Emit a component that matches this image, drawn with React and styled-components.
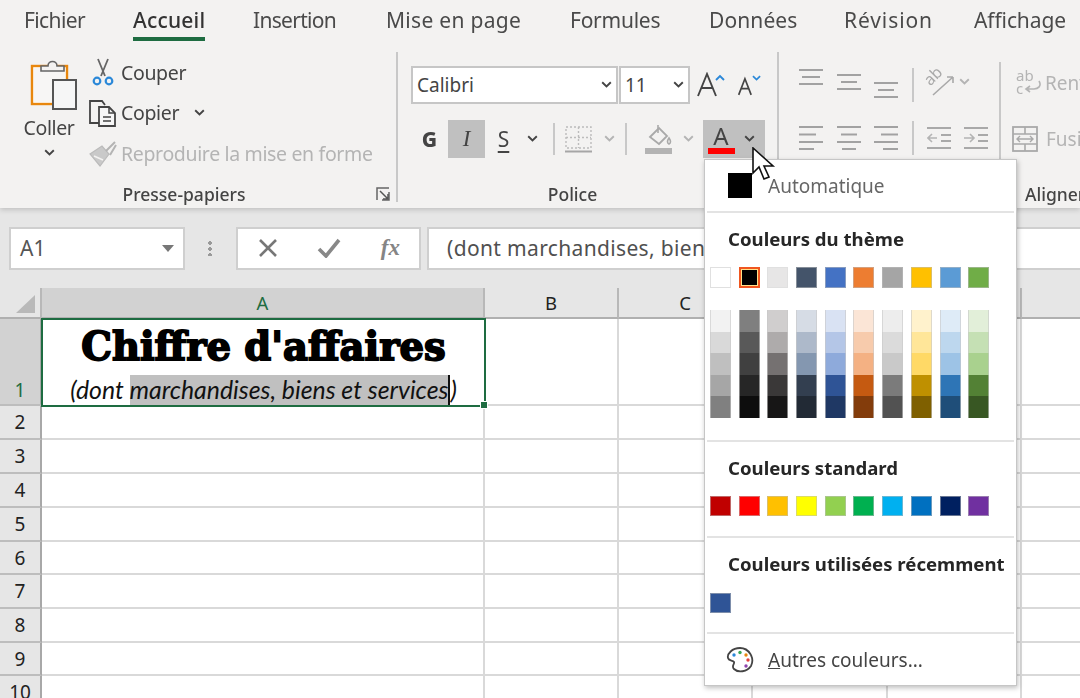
import React from "react";
import styled, { createGlobalStyle } from "styled-components";

const Global = createGlobalStyle`
  html, body { margin: 0; padding: 0; background: #fff; overflow: hidden; }
  * { box-sizing: border-box; }
  svg { flex: none; }
  #root { width: 1080px; height: 698px; overflow: hidden; }
`;

const UI = `"Noto Sans", "Open Sans", sans-serif`;

const Page = styled.div`
  position: relative;
  width: 1080px;
  height: 698px;
  overflow: hidden;
  font-family: ${UI};
  filter: blur(0.45px);
`;

const Ribbon = styled.header`
  height: 208px;
  background: #f3f2f1;
  position: relative;
  z-index: 1;
  box-shadow: 0 2px 5px rgba(0, 0, 0, 0.16);
`;
const TabBar = styled.nav`
  height: 44px;
  display: flex;
  padding-left: 24px;
`;
const Tab = styled.div`
  width: ${(p) => p.$w}px;
  flex: none;
`;
const TabText = styled.span`
  display: inline-block;
  height: 41px;
  line-height: 41px;
  font-size: 21px;
  letter-spacing: ${(p) => p.$ls}px;
  color: ${(p) => (p.$active ? "#333" : "#4a4a4a")};
  white-space: nowrap;
  font-weight: ${(p) => (p.$active ? 500 : 400)};
  border-bottom: 4px solid ${(p) => (p.$active ? "#1e6c41" : "transparent")};
`;
const Groups = styled.div`
  display: flex;
  height: 156px;
  padding-top: 8px;
`;
const Group = styled.section`
  width: ${(p) => p.$w}px;
  flex: none;
  height: 150px;
  display: flex;
  flex-direction: column;
  border-right: ${(p) => (p.$last ? "none" : "2px solid #c8c8c8")};
  padding-left: ${(p) => p.$pl || 0}px;
`;
const GroupBody = styled.div`
  flex: 1;
  display: ${(p) => (p.$col ? "block" : "flex")};
  min-height: 0;
`;
const GroupFoot = styled.div`
  height: 16px;
  display: grid;
  grid-template-columns: 1fr 20px;
  align-items: center;
  margin-left: ${(p) => p.$ml || 0}px;
  white-space: nowrap;
`;
const GroupLabel = styled.div`
  font-size: 17.5px;
  line-height: 16px;
  font-weight: 500;
  color: #444;
  text-align: ${(p) => (p.$left ? "left" : "center")};
  padding-right: ${(p) => p.$pr || 0}px;
`;
const SplitBody = styled.div`
  height: 106px;
  margin-top: 10px;
  border-left: 2px solid #c8c8c8;
  padding-left: 15px;
`;
const SplitFill = styled.div`
  flex: 1;
`;

const PasteCol = styled.div`
  width: 54px;
  margin: 6px 0 0 22px;
  display: flex;
  flex-direction: column;
  align-items: center;
`;
const PasteIcon = styled.span`
  display: flex;
  margin-left: 7px;
`;
const PasteText = styled.div`
  font-size: 19.5px;
  letter-spacing: -0.4px;
  line-height: 26px;
  margin-top: 3px;
  color: #444;
`;
const PasteChevron = styled.div`
  margin-top: 8px;
  height: 12px;
  display: flex;
`;
const ClipList = styled.div`
  margin-left: 13px;
  display: flex;
  flex-direction: column;
`;
const ClipRow = styled.div`
  height: 40.5px;
  display: flex;
  align-items: center;
  gap: 5px;
  color: ${(p) => (p.$off ? "#b4b4b4" : "#444")};
  font-size: 19.5px;
  letter-spacing: -0.35px;
  white-space: nowrap;
`;
const ClipIcon = styled.span`
  width: 27px;
  display: flex;
  justify-content: center;
`;
const ClipChevron = styled.span`
  margin-left: 10px;
  display: flex;
`;

const FontRow = styled.div`
  display: flex;
  align-items: center;
  height: 38px;
  margin-top: ${(p) => p.$mt}px;
`;
const Combo = styled.div`
  width: ${(p) => p.$w}px;
  margin-right: ${(p) => p.$mr || 0}px;
  height: 38px;
  background: #fff;
  border: 2px solid #c6c6c6;
  display: flex;
  align-items: center;
  justify-content: space-between;
  padding: 0 4px 0 4px;
  font-size: 19px;
  color: #444;
`;
const GrowBtn = styled.span`
  display: flex;
  margin-left: ${(p) => p.$ml}px;
`;
const ToggleBtn = styled.div`
  width: ${(p) => p.$w}px;
  margin-left: ${(p) => p.$ml || 0}px;
  height: 38px;
  display: flex;
  align-items: center;
  justify-content: center;
  padding-right: ${(p) => p.$pr || 0}px;
  background: ${(p) => (p.$on ? "#c0c0c0" : "transparent")};
  font-size: 21px;
  color: #444;
`;
const BoldG = styled.span`font-weight: 800;`;
const ItalicI = styled.span`font-family: "Liberation Serif", serif; font-style: italic; font-size: 23px;`;
const UnderS = styled.span`text-decoration: underline; text-underline-offset: 4px; font-size: 21px;`;
const VSep = styled.span`
  width: 2px;
  height: ${(p) => p.$h || 32}px;
  margin-left: ${(p) => p.$l || 0}px;
  background: #c8c8c8;
  flex: none;
`;
const Slot = styled.span`
  display: flex;
  margin-left: ${(p) => p.$ml || 0}px;
  margin-top: ${(p) => p.$mt || 0}px;
`;
const ColorA = styled.span`
  width: 27px;
  display: flex;
  flex-direction: column;
  align-items: center;
  font-size: 24px;
  line-height: 25px;
  margin-top: -1px;
  color: #444;
`;
const ColorBar = styled.span`
  width: 27px;
  height: 6px;
  background: ${(p) => p.$c};
`;

const AlignRow = styled.div`
  display: flex;
  align-items: ${(p) => p.$ai || "center"};
  height: ${(p) => p.$h}px;
  margin-top: ${(p) => p.$mt}px;
`;
const FadedText = styled.span`
  font-size: 19px;
  color: #b4b4b4;
  margin-left: ${(p) => p.$ml}px;
  white-space: nowrap;
`;
const ShiftLeft = styled.span`
  display: flex;
  margin-left: -4px;
`;

const FormulaBar = styled.div`
  height: 80px;
  background: #e6e6e6;
  display: flex;
  align-items: center;
  padding: 17px 0 17px 9px;
`;
const NameBox = styled.div`
  width: 176px;
  height: 43px;
  background: #fff;
  border: 2px solid #cfcfcf;
  display: flex;
  align-items: center;
  justify-content: space-between;
  padding: 0 9px 0 9px;
  font-size: 21px;
  color: #555;
`;
const Caret = styled.span`
  width: 0;
  height: 0;
  border-left: 6px solid transparent;
  border-right: 6px solid transparent;
  border-top: 7px solid #777;
`;
const Grip = styled.span`
  width: 4px;
  height: 16px;
  margin: 0 24px 0 23px;
  background: radial-gradient(circle, #999 1.6px, transparent 2px) 0 0 / 4px 6px;
`;
const FxBox = styled.div`
  width: 185px;
  height: 43px;
  background: #fff;
  border: 2px solid #cfcfcf;
  display: flex;
  align-items: center;
  justify-content: space-between;
  padding: 0 19px 0 20px;
  margin-right: 6px;
`;
const Fx = styled.span`
  font-family: "Liberation Serif", serif;
  font-style: italic;
  font-weight: 700;
  font-size: 23px;
  color: #858585;
`;
const FormulaInput = styled.div`
  flex: 1;
  height: 43px;
  background: #fff;
  border: 2px solid #cfcfcf;
  border-right: none;
  line-height: 39px;
  padding-left: 18px;
  font-size: 21px;
  letter-spacing: 0.35px;
  color: #505050;
  white-space: nowrap;
  overflow: hidden;
`;

const Sheet = styled.div`
  display: grid;
  grid-template-columns: 42px 443px 134px 134px 135px 134px 134px;
  grid-template-rows: 31px 87px 34px 34px 34px 34px 33px 34px 34px 33px 34px;
  background: #fff;
  width: 1156px;
`;
const CornerCell = styled.div`
  background: #e6e6e6;
  border-right: 2px solid #b8b8b8;
  border-bottom: 2px solid #b0b0b0;
  display: flex;
  align-items: flex-end;
  justify-content: flex-end;
  padding: 0 5px 4px 0;
`;
const Triangle = styled.span`
  width: 0;
  height: 0;
  border-left: 19px solid transparent;
  border-bottom: 18px solid #b9b9b9;
`;
const ColHead = styled.div`
  background: ${(p) => (p.$sel ? "#d2d2d2" : "#e6e6e6")};
  color: ${(p) => (p.$sel ? "#1e6c41" : "#222")};
  border-right: 2px solid #b8b8b8;
  border-bottom: 2px solid #b0b0b0;
  display: flex;
  align-items: center;
  justify-content: center;
  font-size: 18.5px;
`;
const RowHead = styled.div`
  background: ${(p) => (p.$sel ? "#d2d2d2" : "#e6e6e6")};
  color: ${(p) => (p.$sel ? "#1e6c41" : "#222")};
  border-right: 2px solid #a8a8a8;
  border-bottom: 2px solid #bdbdbd;
  display: flex;
  align-items: ${(p) => (p.$sel ? "flex-end" : "center")};
  justify-content: center;
  padding-bottom: ${(p) => (p.$sel ? 1 : 0)}px;
  font-size: 19px;
`;
const Cell = styled.div`
  border-right: 2px solid #d9d9d9;
  border-bottom: 2px solid #d9d9d9;
`;
const ActiveCell = styled.div`
  position: relative;
  margin: -1px;
  border: 2px solid #1e6c41;
  background: #fff;
  z-index: 1;
  display: flex;
  flex-direction: column;
  align-items: center;
  white-space: nowrap;
`;
const Handle = styled.span`
  position: absolute;
  right: -4px;
  bottom: -4px;
  width: 8px;
  height: 8px;
  background: #1e6c41;
  border: 1px solid #fff;
`;
const Title = styled.div`
  font-family: "DejaVu Serif", serif;
  font-weight: 700;
  font-size: 38.5px;
  line-height: 46px;
  margin-top: 4px;
  color: #000;
  -webkit-text-stroke: 1.8px #000;
`;
const SubTitle = styled.div`
  font-family: Lato, sans-serif;
  font-style: italic;
  font-size: 24.8px;
  line-height: 30px;
  margin-top: 5px;
  color: #111;
`;
const Selected = styled.span`
  display: inline-block;
  background: #c0c0c0;
  border-right: 2px solid #111;
`;

const Menu = styled.div`
  position: absolute;
  left: 704px;
  top: 159px;
  width: 313px;
  height: 527px;
  z-index: 3;
  background: #fff;
  border: 1px solid #c6c6c6;
  box-shadow: 1px 2px 5px rgba(0, 0, 0, 0.25);
  padding: 0 2px;
`;
const AutoRow = styled.div`
  height: 51px;
  display: flex;
  align-items: center;
  gap: 16px;
  padding-left: 21px;
  font-size: 19px;
  color: #666;
`;
const AutoSwatch = styled.span`
  width: 24px;
  height: 25px;
  background: #000;
`;
const Divider = styled.div`
  height: 2px;
  background: #e3e3e3;
`;
const MenuTitle = styled.div`
  font-size: 18.6px;
  font-weight: 700;
  color: #262626;
  padding-left: 21px;
  line-height: 26px;
  margin-top: ${(p) => p.$mt}px;
  white-space: nowrap;
`;
const SwatchGrid = styled.div`
  display: flex;
  padding-left: 3px;
  margin-top: ${(p) => p.$mt}px;
`;
const SwatchCell = styled.div`
  width: 28.7px;
  display: flex;
  flex-direction: column;
`;
const Swatch = styled.span`
  width: 21px;
  height: ${(p) => p.$h || 21}px;
  background: ${(p) => p.$c};
  border: 1px solid ${(p) => (p.$white ? "#e0e0e0" : "rgba(190,190,190,0.55)")};
`;
const PickedSwatch = styled.span`
  width: 21px;
  height: 21px;
  background: #000;
  border: 2px solid #f0561f;
  box-shadow: inset 0 0 0 1px #ffe28a;
`;
const RampSeg = styled.span`
  width: 21px;
  height: 21.5px;
  background: ${(p) => p.$c};
  border-left: 1px solid rgba(200,200,200,0.6);
  border-right: 1px solid rgba(200,200,200,0.6);
`;
const MoreRow = styled.div`
  height: 52px;
  display: flex;
  align-items: center;
  padding-left: 19px;
  gap: 14px;
  font-size: 19px;
  color: #444;
`;
const AccessKey = styled.span`text-decoration: underline;`;
const CursorArrow = styled.svg`
  position: absolute;
  left: 751px;
  top: 147px;
  z-index: 4;
`;

const Chevron = ({ c = "#444", w = 11 }) => (
  <svg width={w} height={w * 0.65} viewBox="0 0 11 7" fill="none">
    <path d="M1.2 1.2 5.5 5.4 9.8 1.2" stroke={c} strokeWidth="1.9" />
  </svg>
);

const LineStack = ({ lines, color = "#a2a2a2", h = 20, w = 24 }) => (
  <svg width={w} height={h} viewBox={`0 0 ${w} ${h}`}>
    {lines.map(([x1, x2, y], i) => (
      <line key={i} x1={x1} x2={x2} y1={y} y2={y} stroke={color} strokeWidth="2" />
    ))}
  </svg>
);

const ClipboardIcon = () => (
  <svg width="48" height="54" viewBox="0 0 48 54" fill="none">
    <rect x="3" y="8" width="35" height="38" fill="#fff" stroke="#e8870e" strokeWidth="2.4" />
    <rect x="5" y="10" width="31" height="34" fill="#f7f6f5" />
    <path d="M12 13V8h7c0-6 9-6 9 0h7v5H12Z" fill="#f3f2f1" stroke="#666" strokeWidth="1.6" />
    <rect x="24" y="22" width="23" height="29" fill="#f6f6f6" stroke="#555" strokeWidth="2" />
  </svg>
);
const Scissors = () => (
  <svg width="22" height="28" viewBox="0 0 22 28" fill="none">
    <path d="M6 1 13 18M16 1 9 18" stroke="#666" strokeWidth="1.8" />
    <circle cx="5" cy="23" r="3.3" stroke="#2b88d8" strokeWidth="2.2" />
    <circle cx="17" cy="23" r="3.3" stroke="#2b88d8" strokeWidth="2.2" />
  </svg>
);
const CopyIcon = () => (
  <svg width="29" height="28" viewBox="0 0 29 28" fill="none">
    <path d="M11 24H2V2h12l3 4" stroke="#444" strokeWidth="1.8" />
    <path d="M11 8h10l6 6v13H11V8Z" fill="#f6f6f6" stroke="#444" strokeWidth="1.8" />
    <path d="M21 8v6h6M15 18h8M15 22h8" stroke="#444" strokeWidth="1.5" />
  </svg>
);
const BrushIcon = () => (
  <svg width="28" height="27" viewBox="0 0 28 27" fill="none">
    <path d="M1 14 13 6l7 8-9 12L1 14Z" fill="#c9c9c9" stroke="#bbb" strokeWidth="1.2" />
    <path d="M17 11 26 2M21 15 27 5" stroke="#b4b4b4" strokeWidth="2" />
    <path d="M5 16 14 20" stroke="#f3f2f1" strokeWidth="1.4" />
  </svg>
);
const Launcher = () => (
  <svg width="14" height="14" viewBox="0 0 14 14" fill="none">
    <path d="M1 13V1h12M13 5v8H6" stroke="#666" strokeWidth="1.5" />
    <path d="M4 4l8 8M12 7v5H7" stroke="#555" strokeWidth="1.5" />
  </svg>
);
const GrowFont = ({ up }) => (
  <svg width={up ? 28 : 25} height="26" viewBox="0 0 28 26" fill="none">
    <path d={up ? "M1 24 10 2l9 22M4.5 16h11" : "M3 24 10 6l7 18M5.7 17h8.6"} stroke="#444" strokeWidth="1.9" />
    <path d={up ? "M19 8l4-4 4 4" : "M19 3l4 4 4-4"} stroke="#2b88d8" strokeWidth="1.9" />
  </svg>
);
const BorderIcon = () => (
  <svg width="27" height="27" viewBox="0 0 27 27" fill="none">
    <rect x="1" y="1" width="25" height="21" stroke="#bcbcbc" strokeWidth="1.4" strokeDasharray="2 2" />
    <path d="M13.5 1v21M1 11.5h25" stroke="#bcbcbc" strokeWidth="1.4" strokeDasharray="2 2" />
    <path d="M0 25.5h27" stroke="#a6a6a6" strokeWidth="2" />
  </svg>
);
const FillIcon = () => (
  <svg width="28" height="30" viewBox="0 0 28 30" fill="none">
    <path d="M5 13 14 4l8 8-8 8-9-7Z" fill="#f3f2f1" stroke="#a9a9a9" strokeWidth="1.8" />
    <path d="M13 1v8M24 14c2 3 2 5 0 6-2-1-2-3 0-6Z" stroke="#a9a9a9" strokeWidth="1.6" />
    <rect y="24" width="27" height="6" fill="#b3b3b3" />
  </svg>
);
const OrientIcon = () => (
  <svg width="30" height="28" viewBox="0 0 30 28" fill="none">
    <path d="M8 27 28 9M28 9h-6M28 9v6" stroke="#a9a9a9" strokeWidth="1.6" />
    <text x="0" y="14" transform="rotate(-45 8 10)" fontFamily="Noto Sans, sans-serif" fontSize="16" fill="#a9a9a9">ab</text>
  </svg>
);
const IndentIcon = ({ left }) => (
  <svg width="24" height="24" viewBox="0 0 24 24" fill="none">
    <path d="M0 2h24M14 9h10M14 15h10M0 22h24" stroke="#a9a9a9" strokeWidth="2" />
    <path d={left ? "M10 12H1M5 8l-4 4 4 4" : "M0 12h9M6 8l4 4-4 4"} stroke="#b4b4b4" strokeWidth="1.6" />
  </svg>
);
const WrapIcon = () => (
  <svg width="26" height="30" viewBox="0 0 26 30" fill="none">
    <text x="0" y="13" fontFamily="Noto Sans, sans-serif" fontSize="15" fill="#b4b4b4">ab</text>
    <text x="0" y="26" fontFamily="Noto Sans, sans-serif" fontSize="15" fill="#b4b4b4">c</text>
    <path d="M23 13c3 5-1 8-5 8h-7M14 18l-4 3 4 3" stroke="#b4b4b4" strokeWidth="1.6" />
  </svg>
);
const MergeIcon = () => (
  <svg width="26" height="26" viewBox="0 0 26 26" fill="none">
    <rect x="1" y="1" width="24" height="24" stroke="#a9a9a9" strokeWidth="1.8" />
    <path d="M1 8h24M1 18h24M13 1v7M13 18v7" stroke="#a9a9a9" strokeWidth="1.6" />
    <path d="M5 13h16M8 10l-3 3 3 3M18 10l3 3-3 3" stroke="#a9a9a9" strokeWidth="1.4" />
  </svg>
);
const XIcon = () => (
  <svg width="20" height="20" viewBox="0 0 20 20">
    <path d="M2 2 18 18M18 2 2 18" stroke="#777" strokeWidth="2.6" />
  </svg>
);
const CheckIcon = () => (
  <svg width="24" height="20" viewBox="0 0 24 20" fill="none">
    <path d="M2 11 9 18 22 2" stroke="#888" strokeWidth="3.6" />
  </svg>
);
const PaletteIcon = () => (
  <svg width="28" height="28" viewBox="0 0 28 28" fill="none">
    <path d="M14 2C6 2 1 8 2 12c.6 3 5 2 6 4s-3 4 0 7c4 4 13 3 17-3 4-8-2-18-11-18Z" stroke="#444" strokeWidth="1.8" />
    <circle cx="8" cy="9" r="1.7" fill="#2b88d8" />
    <circle cx="14" cy="6.5" r="1.7" fill="#3aa655" />
    <circle cx="20" cy="9" r="1.7" fill="#e8870e" />
    <circle cx="22" cy="14" r="1.7" fill="#e04040" />
    <circle cx="20" cy="20" r="1.7" fill="#8e44ad" />
  </svg>
);

const tabs = [
  { t: "Fichier", w: 109, ls: -0.6 },
  { t: "Accueil", w: 120, ls: 0.2 },
  { t: "Insertion", w: 133, ls: -0.7 },
  { t: "Mise en page", w: 184, ls: 0.3 },
  { t: "Formules", w: 139, ls: -0.25 },
  { t: "Données", w: 135, ls: 0.1 },
  { t: "Révision", w: 130, ls: 0.9 },
  { t: "Affichage", w: 106, ls: -0.1 },
];
const columns = ["A", "B", "C", "D", "E", "F"];
const rowHeads = [1, 2, 3, 4, 5, 6, 7, 8, 9, 10];
const theme = ["#ffffff", "#000000", "#e7e6e6", "#44546a", "#4472c4", "#ed7d31", "#a5a5a5", "#ffc000", "#5b9bd5", "#70ad47"];
const ramps = [
  ["#f2f2f2", "#d9d9d9", "#bfbfbf", "#a6a6a6", "#808080"],
  ["#7f7f7f", "#595959", "#404040", "#262626", "#0d0d0d"],
  ["#d0cece", "#aeabab", "#757171", "#3a3838", "#171616"],
  ["#d6dce5", "#adb9ca", "#8497b0", "#333f50", "#222a35"],
  ["#d9e2f3", "#b4c6e7", "#8eaadb", "#2f5496", "#1f3864"],
  ["#fbe5d6", "#f7cbac", "#f4b183", "#c55a11", "#833c0b"],
  ["#ededed", "#dbdbdb", "#c9c9c9", "#7b7b7b", "#525252"],
  ["#fff2cc", "#ffe699", "#ffd966", "#bf9000", "#7f6000"],
  ["#deebf7", "#bdd7ee", "#9dc3e6", "#2e75b6", "#1f4e79"],
  ["#e2efd9", "#c5e0b4", "#a9d18e", "#538135", "#385723"],
];
const standard = ["#c00000", "#ff0000", "#ffc000", "#ffff00", "#92d050", "#00b050", "#00b0f0", "#0070c0", "#002060", "#7030a0"];

const alignLeft = [[0, 24, 2], [0, 17, 9.5], [0, 24, 17], [0, 15, 24]];
const alignCenter = [[0, 24, 2], [4, 20, 9.5], [0, 24, 17], [5, 19, 24]];
const alignRight = [[0, 24, 2], [7, 24, 9.5], [0, 24, 17], [9, 24, 24]];

export default function App() {
  return (
    <Page>
      <Global />
      <Ribbon>
        <TabBar>
          {tabs.map(({ t, w, ls }) => (
            <Tab key={t} $w={w}>
              <TabText $ls={ls} $active={t === "Accueil"}>{t}</TabText>
            </Tab>
          ))}
        </TabBar>
        <Groups>
          <Group $w={398}>
            <GroupBody>
              <PasteCol>
                <PasteIcon><ClipboardIcon /></PasteIcon>
                <PasteText>Coller</PasteText>
                <PasteChevron><Chevron /></PasteChevron>
              </PasteCol>
              <ClipList>
                <ClipRow><ClipIcon><Scissors /></ClipIcon>Couper</ClipRow>
                <ClipRow>
                  <ClipIcon><CopyIcon /></ClipIcon>Copier
                  <ClipChevron><Chevron /></ClipChevron>
                </ClipRow>
                <ClipRow $off><ClipIcon><BrushIcon /></ClipIcon>Reproduire la mise en forme</ClipRow>
              </ClipList>
            </GroupBody>
            <GroupFoot>
              <GroupLabel $pr={8}>Presse-papiers</GroupLabel>
              <Launcher />
            </GroupFoot>
          </Group>

          <Group $w={381} $pl={13}>
            <GroupBody $col>
              <FontRow $mt={14}>
                <Combo $w={207} $mr={1}>Calibri<Chevron /></Combo>
                <Combo $w={71}>11<Chevron /></Combo>
                <GrowBtn $ml={7}><GrowFont up /></GrowBtn>
                <GrowBtn $ml={11}><GrowFont /></GrowBtn>
              </FontRow>
              <FontRow $mt={16}>
                <ToggleBtn $w={37}><BoldG>G</BoldG></ToggleBtn>
                <ToggleBtn $w={37} $on><ItalicI>I</ItalicI></ToggleBtn>
                <ToggleBtn $w={37}><UnderS>S</UnderS></ToggleBtn>
                <Slot $ml={5}><Chevron /></Slot>
                <VSep $l={15} />
                <Slot $ml={10}><BorderIcon /></Slot>
                <Slot $ml={12}><Chevron c="#b4b4b4" /></Slot>
                <VSep $l={10} />
                <Slot $ml={18}><FillIcon /></Slot>
                <Slot $ml={10}><Chevron c="#b4b4b4" /></Slot>
                <ToggleBtn $w={62} $ml={9} $pr={6} $on>
                  <ColorA>A<ColorBar $c="#ff0000" /></ColorA>
                  <Slot $ml={9}><Chevron /></Slot>
                </ToggleBtn>
              </FontRow>
            </GroupBody>
            <GroupFoot $ml={-23}>
              <GroupLabel>Police</GroupLabel>
              <span />
            </GroupFoot>
          </Group>

          <Group $w={220} $pl={20} $last>
            <GroupBody $col>
              <AlignRow $h={30} $mt={16} $ai="flex-start">
                <LineStack lines={[[0, 24, 2], [3, 21, 9], [0, 24, 16]]} />
                <Slot $ml={14} $mt={5}><LineStack lines={[[0, 24, 2], [4, 20, 9], [0, 24, 16]]} /></Slot>
                <Slot $ml={13} $mt={13}><LineStack lines={[[0, 24, 2], [4, 20, 9], [0, 24, 16]]} /></Slot>
                <VSep $h={34} $l={14} />
                <Slot $ml={11}><OrientIcon /></Slot>
                <Slot $ml={4} $mt={10}><Chevron c="#b4b4b4" /></Slot>
              </AlignRow>
              <AlignRow $h={30} $mt={25}>
                <LineStack lines={alignLeft} h={26} />
                <Slot $ml={14}><LineStack lines={alignCenter} h={26} /></Slot>
                <Slot $ml={13}><LineStack lines={alignRight} h={26} /></Slot>
                <VSep $h={34} $l={14} />
                <Slot $ml={13}><IndentIcon left /></Slot>
                <Slot $ml={13}><IndentIcon /></Slot>
              </AlignRow>
            </GroupBody>
          </Group>

          <Group $w={100} $last>
            <SplitBody>
              <AlignRow $h={30} $mt={6}><WrapIcon /><FadedText $ml={3}>Renvoyer</FadedText></AlignRow>
              <AlignRow $h={30} $mt={26}><ShiftLeft><MergeIcon /></ShiftLeft><FadedText $ml={8}>Fusionner</FadedText></AlignRow>
            </SplitBody>
            <SplitFill />
            <GroupFoot $ml={26}>
              <GroupLabel $left>Alignement</GroupLabel>
              <span />
            </GroupFoot>
          </Group>
        </Groups>
      </Ribbon>

      <FormulaBar>
        <NameBox>A1<Caret /></NameBox>
        <Grip />
        <FxBox><XIcon /><CheckIcon /><Fx>fx</Fx></FxBox>
        <FormulaInput>(dont marchandises, biens et services)</FormulaInput>
      </FormulaBar>

      <Sheet>
        <CornerCell><Triangle /></CornerCell>
        {columns.map((c, i) => (
          <ColHead key={c} $sel={i === 0}>{c}</ColHead>
        ))}
        {rowHeads.map((r) => (
          <React.Fragment key={r}>
            <RowHead $sel={r === 1}>{r}</RowHead>
            {columns.map((c) =>
              r === 1 && c === "A" ? (
                <ActiveCell key={c}>
                  <Title>Chiffre d'affaires</Title>
                  <SubTitle>
                    (dont <Selected>marchandises, biens et services</Selected>)
                  </SubTitle>
                  <Handle />
                </ActiveCell>
              ) : (
                <Cell key={c} />
              )
            )}
          </React.Fragment>
        ))}
      </Sheet>

      <Menu>
        <AutoRow><AutoSwatch />Automatique</AutoRow>
        <Divider />
        <MenuTitle $mt={13}>Couleurs du thème</MenuTitle>
        <SwatchGrid $mt={15}>
          {theme.map((c, i) => (
            <SwatchCell key={c}>
              {i === 1 ? <PickedSwatch /> : <Swatch $c={c} $white={i < 3} />}
            </SwatchCell>
          ))}
        </SwatchGrid>
        <SwatchGrid $mt={22}>
          {ramps.map((ramp, i) => (
            <SwatchCell key={i}>
              {ramp.map((c) => <RampSeg key={c} $c={c} />)}
            </SwatchCell>
          ))}
        </SwatchGrid>
        <SwatchGrid $mt={22} />
        <Divider />
        <MenuTitle $mt={13}>Couleurs standard</MenuTitle>
        <SwatchGrid $mt={15}>
          {standard.map((c) => (
            <SwatchCell key={c}><Swatch $c={c} $h={20} /></SwatchCell>
          ))}
        </SwatchGrid>
        <SwatchGrid $mt={20} />
        <Divider />
        <MenuTitle $mt={13}>Couleurs utilisées récemment</MenuTitle>
        <SwatchGrid $mt={16}>
          <SwatchCell><Swatch $c="#2f5496" $h={20} /></SwatchCell>
        </SwatchGrid>
        <SwatchGrid $mt={19} />
        <Divider />
        <MoreRow>
          <PaletteIcon />
          <span><AccessKey>A</AccessKey>utres couleurs...</span>
        </MoreRow>
      </Menu>

      <CursorArrow width="26" height="34" viewBox="0 0 26 34">
        <path d="M2 1v25l6-6 5 12 5-2-5-11h9L2 1Z" fill="#fff" stroke="#111" strokeWidth="1.6" />
      </CursorArrow>
    </Page>
  );
}
